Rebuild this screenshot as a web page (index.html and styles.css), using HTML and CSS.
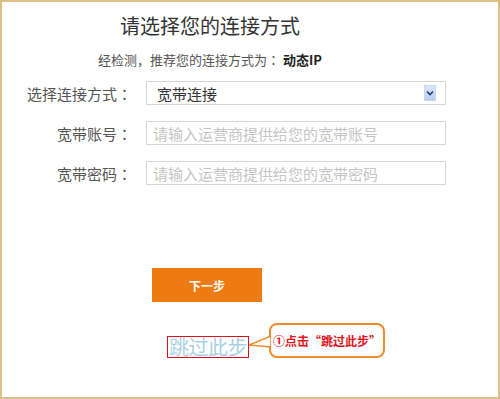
FILE: index.html
```html
<!DOCTYPE html>
<html lang="zh-CN">
<head>
  <meta charset="UTF-8">
  <title>请选择您的连接方式</title>
  <link rel="stylesheet" href="styles.css">
</head>
<body>
  <div class="frame">
    <div class="panel">
      <h1 class="title">请选择您的连接方式</h1>
      <p class="subtitle">经检测，推荐您的连接方式为<span class="colon" lang="ja">：</span> <b>动态IP</b></p>

      <div class="form-row">
        <label class="form-label">选择连接方式<span class="colon" lang="ja">：</span></label>
        <div class="select">
          <span>宽带连接</span>
          <span class="select-arrow">
            <svg width="8" height="6" viewBox="0 0 8 6"><path d="M1 1.5 L4 4.5 L7 1.5" fill="none" stroke="#1d3a78" stroke-width="1.6"/></svg>
          </span>
        </div>
      </div>
      <div class="form-row">
        <label class="form-label">宽带账号<span class="colon" lang="ja">：</span></label>
        <input class="text-input" type="text" placeholder="请输入运营商提供给您的宽带账号">
      </div>
      <div class="form-row">
        <label class="form-label">宽带密码<span class="colon" lang="ja">：</span></label>
        <input class="text-input" type="text" placeholder="请输入运营商提供给您的宽带密码">
      </div>

      <button class="next-btn">下一步</button>

      <div class="skip-row">
        <a class="skip-link" href="#">跳过此步</a>
        <svg class="callout-tail" width="22" height="35" viewBox="0 0 22 35">
          <path d="M0 22 L22 13 L22 24 Z" fill="#fff" stroke="#f08a2c" stroke-width="1.6" stroke-linejoin="round"/>
        </svg>
        <div class="callout">①点击“跳过此步”</div>
      </div>
    </div>
  </div>
</body>
</html>
```

FILE: styles.css
```css
body {
  margin: 0;
  padding: 0;
  background: #fff;
  font-family: "Noto Sans CJK SC", "Noto Sans", sans-serif;
}

.frame {
  width: 500px;
  height: 399px;
  box-sizing: border-box;
  border: 2px solid #dcbf85;
  background: #fff;
  overflow: hidden;
}

.panel {
  width: 416px;
  padding-top: 12px;
}

.title {
  margin: 0;
  font-size: 20px;
  line-height: 24px;
  font-weight: normal;
  color: #333;
  text-align: center;
}

.subtitle {
  margin: 13px 0 0;
  font-size: 13px;
  line-height: 18px;
  color: #555;
  text-align: center;
}

.subtitle b {
  color: #222;
}

/* centred full-width colon, as in the original font */
.colon {
  font-family: "Noto Sans CJK JP", sans-serif;
}

.form-row {
  display: flex;
  align-items: center;
  margin-top: 16px;
}

.subtitle + .form-row {
  margin-top: 12px;
}

.form-label {
  width: 130px;
  flex-shrink: 0;
  margin-right: 14px;
  text-align: right;
  font-size: 15px;
  color: #555;
}

.select,
.text-input {
  width: 300px;
  height: 24px;
  flex-shrink: 0;
  box-sizing: border-box;
  border: 1px solid #d6d6d6;
  background: #fff;
  font-family: inherit;
  font-size: 15px;
}

.select {
  display: flex;
  align-items: center;
  justify-content: space-between;
  padding: 0 9px 0 10px;
  color: #333;
}

.select-arrow {
  width: 12px;
  height: 16px;
  display: flex;
  align-items: center;
  justify-content: center;
  background: linear-gradient(#dbe6f8, #b9cdef);
  border: 1px solid #c9d6ee;
  box-sizing: border-box;
}

.text-input {
  padding: 0 6px;
  outline: none;
}

.text-input::placeholder {
  color: #c4c4c4;
}

.next-btn {
  display: block;
  margin: 83px 0 0 150px;
  width: 110px;
  height: 34px;
  border: none;
  background: #ee7a12;
  color: #fff;
  font-family: inherit;
  font-size: 12px;
  font-weight: bold;
}

.skip-row {
  display: flex;
  align-items: flex-end;
  margin: 21px 0 0 165px;
}

.skip-link {
  display: block;
  height: 22px;
  line-height: 20px;
  padding: 0 1px;
  border: 1px solid #e0101c;
  box-sizing: border-box;
  color: #a9d0e3;
  font-size: 20px;
  text-decoration: none;
  letter-spacing: -0.5px;
}

.callout-tail {
  display: block;
  margin-right: -2px;
  position: relative;
  z-index: 1;
}

.callout {
  width: 116px;
  height: 35px;
  box-sizing: border-box;
  border: 2px solid #f08a2c;
  border-radius: 8px;
  display: flex;
  align-items: center;
  justify-content: center;
  color: #e0141e;
  font-size: 12px;
  font-weight: bold;
  white-space: nowrap;
}
```
